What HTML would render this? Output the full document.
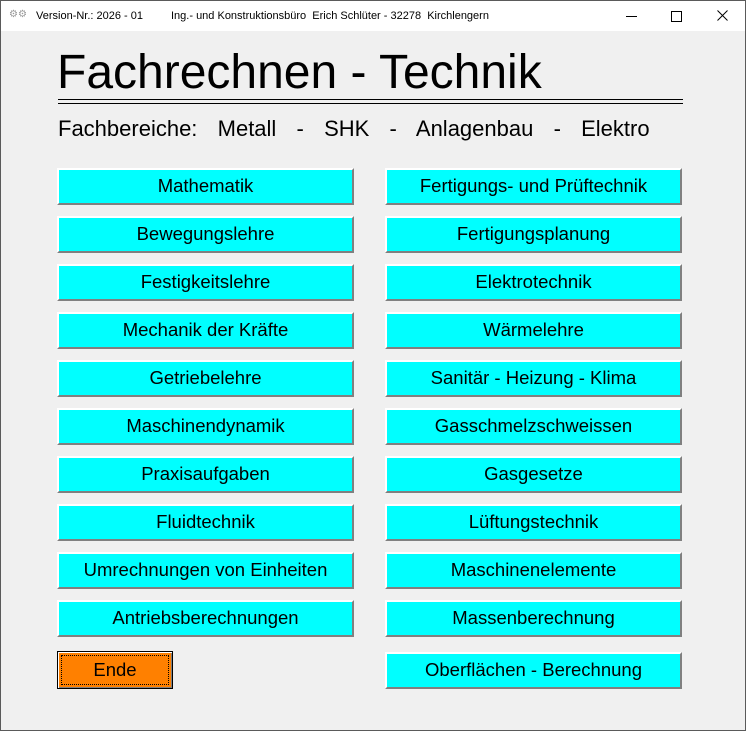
<!DOCTYPE html>
<html><head><style>
body{margin:0;width:746px;height:731px;overflow:hidden;font-family:"Liberation Sans",sans-serif;}
.win{position:absolute;left:0;top:0;width:744px;height:729px;border:1px solid #5a5a5a;background:#f0f0f0;}
.tb{position:absolute;left:0;top:0;width:744px;height:30px;background:#fff;font-size:11px;}
.tb span{position:absolute;top:9px;}
.b{position:absolute;width:293px;height:33px;background:#0ff;border-top:2px solid #fff;border-left:2px solid #fff;border-right:2px solid #808080;border-bottom:2px solid #808080;box-sizing:content-box;font-size:18.5px;text-align:center;line-height:31px;color:#000;}
</style></head><body><div class="win">
<div class="tb">
<span style="left:8px;color:#999;font-size:10px;top:8px">⚙⚙</span>
<span style="left:35px">Version-Nr.: 2026 - 01</span>
<span style="left:170px">Ing.- und Konstruktionsbüro&nbsp; Erich Schlüter - 32278&nbsp; Kirchlengern</span>
<div style="position:absolute;left:625px;top:15px;width:11px;border-top:1px solid #000"></div>
<div style="position:absolute;left:670px;top:10px;width:9px;height:9px;border:1px solid #000"></div>
<svg style="position:absolute;left:716px;top:9px" width="11" height="11"><path d="M0.5 0.5L10.5 10.5M10.5 0.5L0.5 10.5" stroke="#000" stroke-width="1"/></svg>
</div>
<div style="position:absolute;left:56px;top:44px;font-size:48px;letter-spacing:0px;">Fachrechnen - Technik</div>
<div style="position:absolute;left:57px;top:98px;width:625px;border-top:1px solid #000;"></div>
<div style="position:absolute;left:57px;top:102px;width:625px;border-top:1px solid #000;"></div>
<div style="position:absolute;left:57px;top:115px;font-size:22px;word-spacing:4px">Fachbereiche:&nbsp; Metall&nbsp; -&nbsp; SHK&nbsp; -&nbsp; Anlagenbau&nbsp; -&nbsp; Elektro</div>
<div class="b" style="left:56px;top:167px">Mathematik</div>
<div class="b" style="left:56px;top:215px">Bewegungslehre</div>
<div class="b" style="left:56px;top:263px">Festigkeitslehre</div>
<div class="b" style="left:56px;top:311px">Mechanik der Kräfte</div>
<div class="b" style="left:56px;top:359px">Getriebelehre</div>
<div class="b" style="left:56px;top:407px">Maschinendynamik</div>
<div class="b" style="left:56px;top:455px">Praxisaufgaben</div>
<div class="b" style="left:56px;top:503px">Fluidtechnik</div>
<div class="b" style="left:56px;top:551px">Umrechnungen von Einheiten</div>
<div class="b" style="left:56px;top:599px">Antriebsberechnungen</div>
<div class="b" style="left:384px;top:167px">Fertigungs- und Prüftechnik</div>
<div class="b" style="left:384px;top:215px">Fertigungsplanung</div>
<div class="b" style="left:384px;top:263px">Elektrotechnik</div>
<div class="b" style="left:384px;top:311px">Wärmelehre</div>
<div class="b" style="left:384px;top:359px">Sanitär - Heizung - Klima</div>
<div class="b" style="left:384px;top:407px">Gasschmelzschweissen</div>
<div class="b" style="left:384px;top:455px">Gasgesetze</div>
<div class="b" style="left:384px;top:503px">Lüftungstechnik</div>
<div class="b" style="left:384px;top:551px">Maschinenelemente</div>
<div class="b" style="left:384px;top:599px">Massenberechnung</div>
<div class="b" style="left:384px;top:651px">Oberflächen - Berechnung</div>
<div style="position:absolute;left:56px;top:650px;width:114px;height:36px;border:1px solid #000;background:#ff8000;box-shadow:inset 1px 1px 0 #fff,inset -1px -1px 0 #808080;">
<div style="position:absolute;left:3px;top:3px;right:3px;bottom:3px;border:1px dotted #000;text-align:center;line-height:27px;font-size:18.5px">Ende</div></div>
</div></body></html>
